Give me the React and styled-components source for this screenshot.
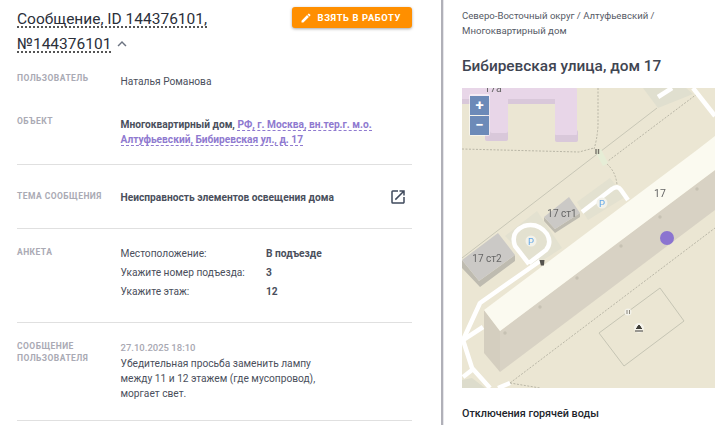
import React from 'react';
import styled, { createGlobalStyle } from 'styled-components';
import { MdEdit, MdKeyboardArrowUp, MdOpenInNew } from 'react-icons/md';

const GlobalStyle = createGlobalStyle`
  html, body {
    margin: 0;
    padding: 0;
    background: #fff;
  }
  body {
    font-family: Roboto, "Noto Sans", sans-serif;
  }
`;

const Page = styled.div`
  display: flex;
  width: 715px;
  height: 425px;
  overflow: hidden;
`;

const LeftPanel = styled.section`
  flex: 0 0 441px;
  box-sizing: border-box;
  padding: 7px 29px 0 17px;
  overflow: hidden;
`;

const Splitter = styled.div`
  flex: 0 0 2px;
  background: #b0b0b8;
  margin-right: 1px;
  box-shadow: 1px 0 0 #e6e6ea;
`;

const RightPanel = styled.section`
  flex: 1;
  min-width: 0;
  padding: 8px 0 0 18px;
`;

const Header = styled.header`
  display: flex;
  justify-content: space-between;
  align-items: flex-start;
`;

const Title = styled.h1`
  margin: 0;
  width: 240px;
  font-size: 15.5px;
  font-weight: 400;
  line-height: 25px;
  color: #2b2f3a;
`;

const TitleText = styled.span`
  text-decoration: underline dotted 2px #555;
  text-underline-offset: 2px;
`;

const Chevron = styled(MdKeyboardArrowUp)`
  width: 18px;
  height: 18px;
  margin-left: 2px;
  vertical-align: -4px;
  color: #6b7280;
`;

const TakeButton = styled.button`
  display: flex;
  align-items: center;
  gap: 6px;
  height: 21px;
  padding: 0 11px 0 8px;
  border: 0;
  border-radius: 3px;
  background: #ff8f00;
  box-shadow: 0 1px 3px rgba(0, 0, 0, 0.35);
  color: #fff;
  font-family: inherit;
  font-size: 9.35px;
  font-weight: 700;
  letter-spacing: 0.62px;
  text-transform: uppercase;
  svg {
    width: 12px;
    height: 12px;
  }
`;

const Row = styled.div`
  display: grid;
  grid-template-columns: 103.5px 1fr auto;
  padding: ${(p) => p.$pad};
  border-bottom: ${(p) => (p.$divided ? '1px solid #e0e0e0' : '0')};
`;

const Label = styled.div`
  font-size: 8.5px;
  font-weight: 700;
  letter-spacing: 0.45px;
  line-height: 12px;
  text-transform: uppercase;
  color: #aaaab4;
`;

const Value = styled.div`
  font-size: 10.2px;
  font-weight: ${(p) => (p.$bold ? 700 : 400)};
  line-height: 15px;
  color: #4a4f5c;
  margin-top: ${(p) => p.$offset || 0}px;
`;

const AddressLink = styled.a`
  color: #8f7ad0;
  border-bottom: 1px dashed #8f7ad0;
`;

const LinkIcon = styled(MdOpenInNew)`
  width: 18px;
  height: 18px;
  margin: -2px 5px 0 0;
  color: #3f4a5c;
`;

const Survey = styled.div`
  display: grid;
  grid-template-columns: 145.5px 1fr;
  row-gap: 4px;
`;

const Message = styled.div`
  width: 205px;
`;

const MessageDate = styled.div`
  font-size: 9.5px;
  font-weight: 500;
  line-height: 16px;
  color: #a8a8b2;
`;

const Breadcrumbs = styled.div`
  font-size: 9.6px;
  line-height: 15px;
  color: #555a66;
`;

const AddressTitle = styled.h2`
  margin: 18px 0 12px;
  font-size: 15.4px;
  font-weight: 500;
  line-height: 20px;
  color: #3f4552;
`;

const MapBox = styled.div`
  position: relative;
  height: 300px;
  overflow: hidden;
  background: #ebe6d3;
`;

const MapDrawing = styled.svg`
  display: block;
  width: 253px;
  height: 300px;
  filter: blur(0.35px);
`;

const ZoomControl = styled.div`
  position: absolute;
  left: 7px;
  top: 6px;
  display: flex;
  flex-direction: column;
  gap: 1px;
  padding: 2px 1px 1px;
  border-radius: 2px;
  background: rgba(255, 255, 255, 0.55);
`;

const ZoomButton = styled.button`
  width: 19px;
  height: 19px;
  padding: 0;
  border: 0;
  background: #6c8ab8;
  color: #fff;
  font-family: inherit;
  font-size: 15px;
  font-weight: 700;
  line-height: 17px;
`;

const SectionTitle = styled.h3`
  margin: 18px 0 0;
  font-size: 10.8px;
  font-weight: 500;
  line-height: 15px;
  color: #22252c;
`;

const MapLabel = styled.text`
  font-family: Roboto, sans-serif;
  font-size: ${(p) => p.$size || 10.5}px;
  fill: #666;
  text-anchor: middle;
`;

const ParkingSign = ({ x, y }) => (
  <g>
    <circle cx={x} cy={y} r="5.5" fill="#f3f2ea" />
    <text x={x} y={y + 3.5} fontSize="9.5" fontFamily="Roboto, sans-serif" fill="#62a8e8" textAnchor="middle">P</text>
  </g>
);

const CityMap = () => (
  <MapDrawing viewBox="462 88 253 300">
    <rect x="462" y="88" width="253" height="300" fill="#ebe6d3" />

    {/* pink block */}
    <rect x="545" y="88" width="9" height="2" fill="#efe8c8" />
    <rect x="462" y="98" width="93" height="6" fill="#d9c8da" />
    <rect x="485" y="104" width="23" height="37" rx="2" fill="#d9c8da" />
    <rect x="555" y="130" width="23" height="12" rx="2" fill="#d9c8da" />
    <rect x="462" y="88" width="93" height="11" fill="#e8d6e8" />
    <rect x="490" y="96" width="18" height="37" rx="2" fill="#e8d6e8" />
    <rect x="555" y="88" width="22" height="47" rx="1" fill="#e8d6e8" />
    <MapLabel x="493" y="92">17а</MapLabel>

    {/* top right yard */}
    <polygon points="643,88 658,108 693,94 686,88" fill="#e0dfcf" />

    {/* ground patches */}
    <polygon points="505,236 537,211 562,248 534,266" fill="#e3e1d0" />
    <polygon points="577,202 610,178 625,197 588,220" fill="#e3e1d0" />
    <polygon points="462,380 472,378 485,388 462,388" fill="#dddccc" />

    {/* fences and paths */}
    <polyline points="657,108 462,258" fill="none" stroke="#c8c7b6" strokeWidth="1" />
    <polygon points="660,288 684,321 624,366 599,333" fill="none" stroke="#c6c5b4" strokeWidth="1" />
    <g fill="none" stroke="#b9b6a6" strokeWidth="1" strokeDasharray="2 1.5">
      <polyline points="462,149 579,152 594,148" />
      <path d="M598,88 L598,126 Q597,140 594,149" />
      <polyline points="697,94 608,161" />
      <path d="M607,164 Q616,172 617,185" />
      <polyline points="510,383 715,228" />
      <polyline points="510,383 540,388" />
    </g>
    <polygon points="595,151 601,149 608,163 603,166" fill="#e6edd6" />
    <path d="M596,149 v5 M598.5,149 v5" stroke="#77736a" strokeWidth="1.4" />

    {/* building 17 */}
    <polygon points="500,331 715,170 715,210 500,372" fill="#d8d2c4" />
    <polygon points="484,310 500,331 500,372 484,353" fill="#d4cebf" />
    <polygon points="484,310 697,150 715,136 715,170 500,331" fill="#fbfaf0" />
    {[[505, 333], [540, 307], [577, 278], [621, 246], [660, 217], [697, 189]].map(([x, y]) => (
      <circle key={x} cx={x} cy={y} r="1.7" fill="#c6c1b3" />
    ))}
    <MapLabel x="660" y="197">17</MapLabel>
    <circle cx="667" cy="238" r="7" fill="#8b74d0" />

    {/* 17 ст2 */}
    <polygon points="462,260 479,281 515,255 515,261 480,287 462,268" fill="#bebbb0" />
    <polygon points="462,260 498,233 515,255 479,281" fill="#cbc9c6" />
    <MapLabel x="487" y="262" $size={10}>17 ст2</MapLabel>

    {/* 17 ст1 */}
    <polygon points="544,217 555,229 580,213 580,217 555,233 544,221" fill="#bebbb0" />
    <polygon points="544,217 569,197 580,213 555,229" fill="#cbc9c6" />
    <MapLabel x="562" y="216.5" $size={10}>17 ст1</MapLabel>

    {/* roads */}
    <g fill="none" stroke="#fff" strokeWidth="4.5" strokeLinejoin="round" strokeLinecap="butt">
      <path d="M529,264 L515,246 Q510,232 524,226 Q538,222 547,234 Q552,243 546,250 L529,263" />
      <polyline points="540,261 480,303 463,340 472,368 490,388" />
      <polyline points="463,340 483,327" />
      <polyline points="463,377 472,370" />
      <polyline points="498,388 510,383" />
      <path d="M582,212 L612,189 Q618,185 621,190 L628,200" />
      <polyline points="658,97 672,88" />
      <polyline points="693,88 715,116" />
    </g>
    <ParkingSign x={531} y={241} />
    <ParkingSign x={602} y={203} />

    {/* poi marks */}
    <path d="M539.5,260 h5 l-0.6,5.5 h-3 z" fill="#55534e" />
    <circle cx="628" cy="312" r="3.5" fill="#f3f2ea" />
    <path d="M627,310 v4 M629.5,310 v4" stroke="#8a867c" strokeWidth="1" />
    <circle cx="639" cy="328" r="5" fill="#f5f4ec" />
    <path d="M635,331 h8 M636,328.5 h6 M639,325 l2,2.5 h-4 z" stroke="#3d3b36" strokeWidth="1" fill="#3d3b36" />
  </MapDrawing>
);

const App = () => (
  <Page>
    <GlobalStyle />
    <LeftPanel>
      <Header>
        <Title>
          <TitleText>Сообщение, ID 144376101,</TitleText>{' '}
          <TitleText>№144376101</TitleText>
          <Chevron />
        </Title>
        <TakeButton>
          <MdEdit />
          Взять в работу
        </TakeButton>
      </Header>

      <Row $pad="15px 0 0">
        <Label>Пользователь</Label>
        <Value $offset={1.5}>Наталья Романова</Value>
      </Row>
      <Row $pad="26.5px 0 17.5px" $divided>
        <Label>Объект</Label>
        <Value $offset={1.5}>
          <strong>Многоквартирный дом, </strong>
          <strong><AddressLink>РФ, г. Москва, вн.тер.г. м.о.</AddressLink></strong>{' '}
          <strong><AddressLink>Алтуфьевский, Бибиревская ул., д. 17</AddressLink></strong>
        </Value>
      </Row>
      <Row $pad="25px 0 22px" $divided>
        <Label>Тема сообщения</Label>
        <Value $bold>Неисправность элементов освещения дома</Value>
        <LinkIcon />
      </Row>
      <Row $pad="17px 0 23px" $divided>
        <Label>Анкета</Label>
        <Survey>
          <Value>Местоположение:</Value>
          <Value $bold>В подъезде</Value>
          <Value>Укажите номер подъезда:</Value>
          <Value $bold>3</Value>
          <Value>Укажите этаж:</Value>
          <Value $bold>12</Value>
        </Survey>
      </Row>
      <Row $pad="17px 0 19px" $divided>
        <Label>Сообщение пользователя</Label>
        <Message>
          <MessageDate>27.10.2025 18:10</MessageDate>
          <Value>Убедительная просьба заменить лампу между 11 и 12 этажем (где мусопровод), моргает свет.</Value>
        </Message>
      </Row>
    </LeftPanel>
    <Splitter />
    <RightPanel>
      <Breadcrumbs>
        Северо-Восточный округ / Алтуфьевский /<br />
        Многоквартирный дом
      </Breadcrumbs>
      <AddressTitle>Бибиревская улица, дом 17</AddressTitle>
      <MapBox>
        <CityMap />
        <ZoomControl>
          <ZoomButton>+</ZoomButton>
          <ZoomButton>−</ZoomButton>
        </ZoomControl>
      </MapBox>
      <SectionTitle>Отключения горячей воды</SectionTitle>
    </RightPanel>
  </Page>
);

export default App;
